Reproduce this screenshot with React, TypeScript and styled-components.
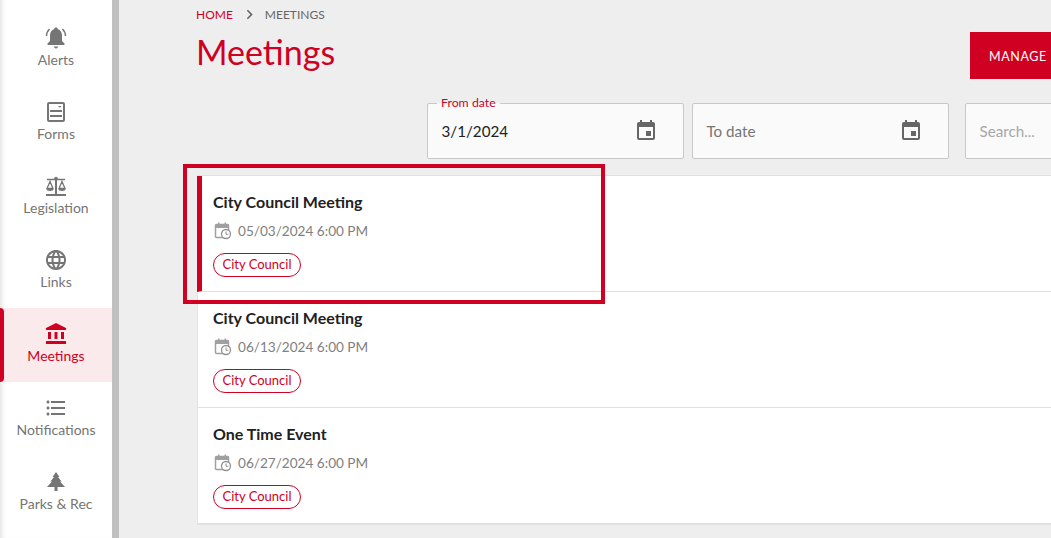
import React from 'react';
import styled, { createGlobalStyle } from 'styled-components';
import {
  MdLanguage,
  MdAccountBalance,
  MdFormatListBulleted,
  MdChevronRight,
  MdEvent,
} from 'react-icons/md';

const RED = '#cf0022';

const GlobalStyle = createGlobalStyle`
  html, body {
    margin: 0;
    padding: 0;
    height: 100%;
    overflow: hidden;
    background: #eeeeee;
    font-family: Lato, "Liberation Sans", sans-serif;
  }
  * {
    box-sizing: border-box;
  }
`;

const Page = styled.div`
  position: relative;
  display: flex;
  width: 1051px;
  height: 538px;
  overflow: hidden;
`;

const Sidebar = styled.nav`
  flex: none;
  width: 119px;
  height: 538px;
  padding-top: 12px;
  background: #ffffff;
  border-right: 7px solid #c0c0c0;
  box-shadow: inset 6px 0 5px -4px #e2e2e2;
`;

const NavItem = styled.div<{ $active?: boolean }>`
  position: relative;
  display: flex;
  flex-direction: column;
  align-items: center;
  height: 74px;
  padding-top: 14px;
  color: ${(p) => (p.$active ? RED : '#757575')};
  background: ${(p) => (p.$active ? '#fbeaec' : 'transparent')};
  font-size: 14px;
  line-height: 20px;

  ${(p) =>
    p.$active &&
    `&::before {
      content: '';
      position: absolute;
      left: 0;
      top: 0;
      bottom: 0;
      width: 4px;
      background: ${RED};
      border-radius: 0 4px 4px 0;
    }`}
`;

const NavIcon = styled.div`
  display: flex;
  align-items: center;
  justify-content: center;
  width: 24px;
  height: 24px;
  font-size: 24px;
`;

const Main = styled.main`
  flex: none;
  width: 1040px;
  padding-left: 77px;
`;

const Breadcrumb = styled.div`
  display: flex;
  align-items: center;
  height: 16px;
  margin-top: 6px;
  font-size: 12px;
  color: #666666;
`;

const Crumb = styled.span<{ $link?: boolean }>`
  color: ${(p) => (p.$link ? RED : '#666666')};
`;

const CrumbArrow = styled(MdChevronRight)`
  margin: 0 6px 0 7px;
  font-size: 19px;
  color: #666666;
`;

const TitleRow = styled.div`
  display: flex;
  justify-content: space-between;
  align-items: flex-start;
  height: 71px;
  margin-top: 10px;
`;

const Title = styled.h1`
  margin: 0;
  font-size: 34px;
  font-weight: 400;
  line-height: 40px;
  color: ${RED};
`;

const ManageButton = styled.button`
  width: 189px;
  height: 47px;
  padding: 2px 0 0 19px;
  border: 0;
  background: ${RED};
  color: #ffffff;
  font-family: inherit;
  font-size: 12.5px;
  letter-spacing: 0.6px;
  text-align: left;
`;

const Filters = styled.div`
  display: flex;
  height: 56px;
  margin-left: 231px;
`;

const Field = styled.div<{ $wide?: boolean; $gap?: number }>`
  position: relative;
  display: flex;
  align-items: center;
  justify-content: space-between;
  flex: none;
  width: ${(p) => (p.$wide ? '240px' : '257px')};
  height: 56px;
  margin-right: ${(p) => p.$gap ?? 0}px;
  padding: 0 25px 0 13.5px;
  background: #fafafa;
  border: 1px solid #c8c8c8;
  border-radius: 2px;
  font-size: 15.2px;
  color: #212121;
`;

const FieldLabel = styled.span`
  position: absolute;
  left: 9px;
  top: -8px;
  padding: 0 4px;
  background: linear-gradient(#eeeeee 50%, #fafafa 50%);
  font-size: 12.3px;
  line-height: 14px;
  color: ${RED};
`;

const Placeholder = styled.span<{ $light?: boolean }>`
  color: ${(p) => (p.$light ? '#a8a8a8' : '#757575')};
`;

const FieldIcon = styled(MdEvent)`
  font-size: 24px;
  color: #666666;
`;

const List = styled.div`
  width: 1000px;
  margin: 16px 0 0 1px;
  background: #ffffff;
  border-top: 1px solid #e0e0e0;
  border-bottom: 2px solid #e0e0e0;
`;

const Row = styled.div<{ $selected?: boolean }>`
  height: 116px;
  padding: 16px 0 0 ${(p) => (p.$selected ? 11 : 15)}px;
  border-left: ${(p) => (p.$selected ? `5px solid ${RED}` : '1px solid #e4e4e4')};
  border-bottom: 1px solid #e0e0e0;

  &:last-child {
    height: 115px;
    border-bottom: 0;
  }
`;

const RowTitle = styled.div`
  font-size: 16px;
  font-weight: 700;
  line-height: 20px;
  color: #212121;
`;

const RowDate = styled.div`
  display: flex;
  align-items: center;
  gap: 6px;
  height: 20px;
  margin-top: 9px;
  padding-left: 1px;
  font-size: 13.6px;
  color: #808080;
`;

const Tag = styled.span`
  display: inline-block;
  height: 24px;
  margin-top: 12px;
  padding: 0 8.5px;
  border: 1px solid ${RED};
  border-radius: 12px;
  font-size: 13px;
  line-height: 21px;
  color: ${RED};
`;

const Highlight = styled.div`
  position: absolute;
  left: 183px;
  top: 164px;
  width: 422px;
  height: 140px;
  border: 4px solid ${RED};
  pointer-events: none;
`;

const BellIcon = () => (
  <svg width="24" height="24" viewBox="0 0 24 24" fill="currentColor">
    <path d="M12 1.500c-1 0-1.700.7-1.700 1.600C7.500 4 6 6.500 6 9.500V15l-2.500 2.500V19h17v-1.500L18 15V9.500c0-3-1.500-5.500-4.300-6.400 0-.9-.7-1.600-1.700-1.600z" />
    <path d="M10 20.500a2 2 0 0 0 4 0z" />
    <path d="M5.500 3C3.500 5 2.500 7.500 2.500 10M18.500 3c2 2 3 4.500 3 7" fill="none" stroke="currentColor" strokeWidth="1.500" />
  </svg>
);

const FormsIcon = () => (
  <svg width="24" height="24" viewBox="0 0 24 24" fill="none">
    <rect x="4" y="3" width="16" height="18" rx="1" stroke="currentColor" strokeWidth="2" />
    <rect x="6" y="10" width="12" height="2" fill="currentColor" />
    <rect x="6" y="15" width="12" height="2" fill="currentColor" />
    <path d="M14 6h3.500l-1.750 1.800z" fill="currentColor" />
  </svg>
);

const ScaleIcon = () => (
  <svg width="24" height="24" viewBox="0 0 24 24" fill="none" stroke="currentColor">
    <path d="M3 5.500h18" strokeWidth="1.500" />
    <circle cx="12" cy="4.500" r="1.800" fill="currentColor" stroke="none" />
    <path d="M12 5v15" strokeWidth="2" />
    <path d="M2 21h20" strokeWidth="2" />
    <path d="M6 7.500L3 14.500h6zM18 7.500l-3 7h6z" strokeWidth="1.300" />
    <path d="M2.500 14.500h7a3.500 2.500 0 0 1-7 0zM14.500 14.500h7a3.500 2.500 0 0 1-7 0z" fill="currentColor" stroke="none" />
  </svg>
);

const TreeIcon = () => (
  <svg width="24" height="24" viewBox="0 0 24 24" fill="currentColor">
    <path d="M12 2l3.500 5H14l3.500 4.500H16l5 5.500h-7.500v4h-3v-4H3l5-5.500H6.500L10 7H8.500z" />
  </svg>
);

const CalendarClock = () => (
  <svg width="18" height="18" viewBox="0 0 18 18">
    <rect x="1.500" y="2.500" width="13" height="13" rx="1" fill="none" stroke="#a0a0a0" strokeWidth="1.500" />
    <rect x="1.500" y="2.500" width="13" height="3.500" fill="#a0a0a0" />
    <rect x="4" y="0.500" width="1.500" height="3" fill="#a0a0a0" />
    <rect x="10.500" y="0.500" width="1.500" height="3" fill="#a0a0a0" />
    <circle cx="12" cy="12" r="4.500" fill="#ffffff" stroke="#909090" strokeWidth="1.300" />
    <path d="M12 9.500v2.800h2.300" fill="none" stroke="#909090" strokeWidth="1" />
  </svg>
);

const navItems = [
  { label: 'Alerts', icon: <BellIcon /> },
  { label: 'Forms', icon: <FormsIcon /> },
  { label: 'Legislation', icon: <ScaleIcon /> },
  { label: 'Links', icon: <MdLanguage /> },
  { label: 'Meetings', icon: <MdAccountBalance />, active: true },
  { label: 'Notifications', icon: <MdFormatListBulleted /> },
  { label: 'Parks & Rec', icon: <TreeIcon /> },
];

const meetings = [
  { title: 'City Council Meeting', date: '05/03/2024 6:00 PM', selected: true },
  { title: 'City Council Meeting', date: '06/13/2024 6:00 PM' },
  { title: 'One Time Event', date: '06/27/2024 6:00 PM' },
];

const App = () => (
  <Page>
    <GlobalStyle />
    <Sidebar>
      {navItems.map((item) => (
        <NavItem key={item.label} $active={item.active}>
          <NavIcon>{item.icon}</NavIcon>
          {item.label}
        </NavItem>
      ))}
    </Sidebar>
    <Main>
      <Breadcrumb>
        <Crumb $link>HOME</Crumb>
        <CrumbArrow />
        <Crumb>MEETINGS</Crumb>
      </Breadcrumb>
      <TitleRow>
        <Title>Meetings</Title>
        <ManageButton>MANAGE</ManageButton>
      </TitleRow>
      <Filters>
        <Field $gap={8}>
          <FieldLabel>From date</FieldLabel>
          3/1/2024
          <FieldIcon />
        </Field>
        <Field $gap={16}>
          <Placeholder>To date</Placeholder>
          <FieldIcon />
        </Field>
        <Field $wide>
          <Placeholder $light>Search...</Placeholder>
        </Field>
      </Filters>
      <List>
        {meetings.map((m) => (
          <Row key={m.date} $selected={m.selected}>
            <RowTitle>{m.title}</RowTitle>
            <RowDate>
              <CalendarClock />
              {m.date}
            </RowDate>
            <Tag>City Council</Tag>
          </Row>
        ))}
      </List>
    </Main>
    <Highlight />
  </Page>
);

export default App;
